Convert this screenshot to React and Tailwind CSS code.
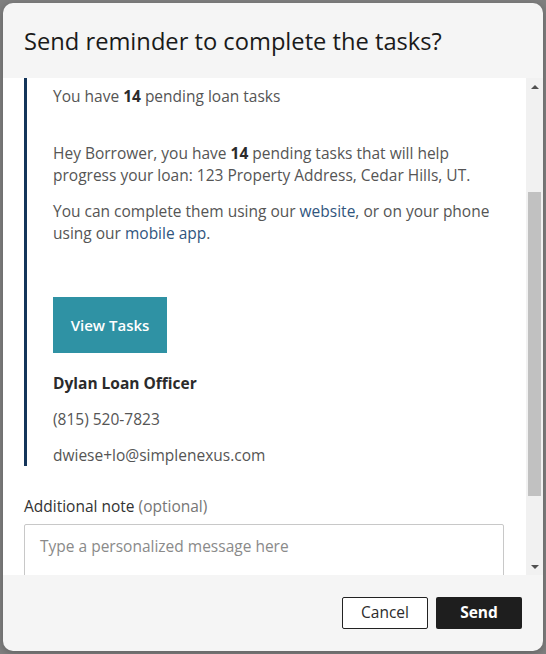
import React from "react";

const font = { fontFamily: '"Open Sans", "Noto Sans", Arial, sans-serif' };

function FakeScrollbar() {
  return (
    <div className="flex w-[17px] shrink-0 flex-col bg-[#f1f1f1]">
      <div className="flex h-[17px] items-center justify-center">
        <div className="h-0 w-0 border-x-[4px] border-b-[4px] border-x-transparent border-b-[#505050]" />
      </div>
      <div className="h-[97px]" />
      <div className="mx-[2px] h-[304px] bg-[#c1c1c1]" />
      <div className="flex-1" />
      <div className="flex h-[17px] items-center justify-center">
        <div className="h-0 w-0 border-x-[4px] border-t-[4px] border-x-transparent border-t-[#505050]" />
      </div>
    </div>
  );
}

export default function App() {
  return (
    <div
      className="h-[654px] w-[546px] bg-[#808080] p-[3px]"
      style={font}
    >
      <div className="flex h-[648px] w-[540px] flex-col overflow-hidden rounded-[10px] bg-[#f5f5f5] shadow-[0_2px_8px_rgba(0,0,0,0.25)]">
        {/* Header */}
        <div className="flex h-[75px] shrink-0 items-center pl-[21px]">
          <h2 className="text-[23.7px] leading-[32px] font-normal text-[#1a1a1a]">
            Send reminder to complete the tasks?
          </h2>
        </div>

        {/* Body */}
        <div className="flex min-h-0 flex-1 bg-white">
          <div className="min-w-0 flex-1 overflow-hidden pl-[21px] pr-[22px]">
            <div className="border-l-[3px] border-[#14355a] pl-[26px] pr-[8px] pt-[7px] text-[15.5px] leading-[22px] text-[#555555]">
              <p className="mb-[35px]">
                You have <span className="font-bold text-[#2b2b2b]">14</span> pending loan tasks
              </p>
              <p className="mb-[14px]">
                Hey Borrower, you have <span className="font-bold text-[#2b2b2b]">14</span> pending tasks that will help progress your loan: 123 Property Address, Cedar Hills, UT.
              </p>
              <p className="mb-[53px]">
                You can complete them using our <span className="text-[#30557e]">website</span>, or on your phone using our <span className="text-[#30557e]">mobile app</span>.
              </p>
              <div className="mb-[19px] flex h-[56px] w-[114px] items-center justify-center bg-[#2f92a4] text-[15px] font-semibold text-white">
                View Tasks
              </div>
              <p className="mb-[14px] font-bold text-[#2b2b2b]">Dylan Loan Officer</p>
              <p className="mb-[14px]">(815) 520-7823</p>
              <p>dwiese+lo@simplenexus.com</p>
            </div>

            <div className="mt-[29px] text-[15.5px] leading-[22px] text-[#333333]">
              Additional note <span className="text-[#767676]">(optional)</span>
            </div>
            <div className="mt-[7px] h-[90px] rounded-[2px] border border-[#c8c8c8] px-[15px] pt-[10px] text-[15.5px] leading-[22px] text-[#8a8a8a]">
              Type a personalized message here
            </div>
          </div>
          <FakeScrollbar />
        </div>

        {/* Footer */}
        <div className="flex h-[76px] shrink-0 items-center justify-end gap-2 pr-[21px]">
          <button className="flex h-[32px] w-[86px] items-center justify-center rounded-[2px] border border-[#222222] bg-white text-[15.5px] text-[#2b2b2b]">
            Cancel
          </button>
          <button className="flex h-[32px] w-[86px] items-center justify-center rounded-[2px] bg-[#1e1e1e] text-[15.5px] font-bold text-white">
            Send
          </button>
        </div>
      </div>
    </div>
  );
}
